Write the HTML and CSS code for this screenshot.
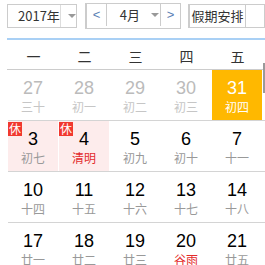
FILE: index.html
```html
<!DOCTYPE html>
<html lang="zh-CN">
<head>
    <meta charset="UTF-8">
    <title>万年历</title>
    <link rel="stylesheet" href="styles.css">
</head>
<body>
    <div class="calendar">
        <div class="toolbar">
            <div class="select year-select">
                <span class="select-text">2017年</span>
                <span class="select-arrow"></span>
            </div>
            <div class="month-group">
                <span class="nav-btn">&lt;</span>
                <div class="select month-select">
                    <span class="select-text">4月</span>
                    <span class="select-arrow"></span>
                </div>
                <span class="nav-btn">&gt;</span>
            </div>
            <div class="holiday-btn">假期安排</div>
            <div class="today-btn"></div>
        </div>

        <div class="weekdays">
            <span>一</span><span>二</span><span>三</span><span>四</span><span>五</span>
        </div>

        <div class="days">
            <div class="week">
                <div class="day other"><b>27</b><i>三十</i></div>
                <div class="day other"><b>28</b><i>初一</i></div>
                <div class="day other"><b>29</b><i>初二</i></div>
                <div class="day other"><b>30</b><i>初三</i></div>
                <div class="day today"><b>31</b><i>初四</i></div>
            </div>
            <div class="week">
                <div class="day rest"><em>休</em><b>3</b><i>初七</i></div>
                <div class="day rest"><em>休</em><b>4</b><i class="festival">清明</i></div>
                <div class="day"><b>5</b><i>初九</i></div>
                <div class="day"><b>6</b><i>初十</i></div>
                <div class="day"><b>7</b><i>十一</i></div>
            </div>
            <div class="week">
                <div class="day"><b>10</b><i>十四</i></div>
                <div class="day"><b>11</b><i>十五</i></div>
                <div class="day"><b>12</b><i>十六</i></div>
                <div class="day"><b>13</b><i>十七</i></div>
                <div class="day"><b>14</b><i>十八</i></div>
            </div>
            <div class="week">
                <div class="day"><b>17</b><i>廿一</i></div>
                <div class="day"><b>18</b><i>廿二</i></div>
                <div class="day"><b>19</b><i>廿三</i></div>
                <div class="day"><b>20</b><i class="festival">谷雨</i></div>
                <div class="day"><b>21</b><i>廿五</i></div>
            </div>
        </div>

        <div class="scroll-thumb"></div>
    </div>
</body>
</html>
```

FILE: styles.css
```css
body {
    margin: 0;
    background-color: white;
    font-family: "Liberation Sans", "Noto Sans CJK SC", sans-serif;
    color: #333;
    overflow: hidden;
}
.calendar {
    position: relative;
    width: 265px;
    height: 265px;
    overflow: hidden;
}

/* top bar with selects */
.toolbar {
    display: flex;
    align-items: center;
    padding: 4px 0 0 7px;
    height: 24px;
    white-space: nowrap;
}
.select {
    display: flex;
    align-items: center;
    height: 22px;
    border: 1px solid #ccc;
    background-color: white;
    font-family: "Noto Sans CJK SC", sans-serif;
    font-size: 13px;
    color: #333;
}
.year-select {
    width: 73px;
}
.year-select .select-text {
    width: 42px;
    padding-left: 10px;
    border-right: 1px solid #ddd;
    line-height: 22px;
}
.select-arrow {
    width: 0;
    height: 0;
    margin-left: 7px;
    border-left: 4px solid transparent;
    border-right: 4px solid transparent;
    border-top: 4px solid #999;
}
.month-group {
    display: flex;
    margin-left: 8px;
    height: 24px;
    border: 1px solid #ccc;
    border-left: 2px solid #ccc;
}
.nav-btn {
    width: 19px;
    line-height: 22px;
    text-align: center;
    font-size: 13px;
    color: #5a7fb5;
}
.month-select {
    width: 53px;
    border-top: none;
    border-bottom: none;
}
.month-select .select-text {
    width: 33px;
    text-align: right;
    line-height: 22px;
}
.month-select .select-arrow {
    margin-left: 11px;
}
.holiday-btn {
    margin-left: 7px;
    width: 62px;
    height: 22px;
    line-height: 22px;
    border: 1px solid #ccc;
    border-left: 2px solid #ccc;
    text-align: center;
    font-family: "Noto Sans CJK SC", sans-serif;
    font-size: 13px;
    color: #333;
}
.today-btn {
    width: 20px;
    height: 22px;
    border: 1px solid #ccc;
    border-left: none;
}

/* weekday header */
.weekdays {
    display: flex;
    margin: 10px 0 0 7px;
    border-top: 2px solid #a9d0f5;
    padding-left: 1px;
    height: 29px;
    border-bottom: 1px solid #ccc;
}
.weekdays span {
    flex: none;
    width: 51px;
    text-align: center;
    padding-top: 6px;
    line-height: 20px;
    font-family: "Noto Sans CJK SC", sans-serif;
    font-size: 14px;
    color: #333;
}

/* day grid */
.days {
    margin-left: 8px;
}
.week {
    display: flex;
    border-bottom: 1px solid #d4d4d4;
}
.day {
    position: relative;
    flex: none;
    width: 50px;
    height: 50px;
    margin-right: 1px;
    display: flex;
    flex-direction: column;
    align-items: center;
    padding-top: 8px;
    box-sizing: border-box;
}
.day b {
    font-weight: normal;
    font-size: 18px;
    line-height: 20px;
    color: #000;
}
.day i {
    font-style: normal;
    font-family: "Noto Sans CJK SC", sans-serif;
    font-size: 12px;
    line-height: 14px;
    margin-top: 2px;
    color: #999;
}
.day.other b { color: #bbb; }
.day.other i { color: #c6c6c6; }
.day.today { background-color: #ffb800; }
.day.today b, .day.today i { color: white; }
.day.rest { background-color: #fdecec; }
.day i.festival { color: #e32b2b; }
.day em {
    position: absolute;
    top: 1px;
    left: 0;
    width: 14px;
    height: 14px;
    line-height: 14px;
    text-align: center;
    background-color: #f1392f;
    color: white;
    font-style: normal;
    font-family: "Noto Sans CJK SC", sans-serif;
    font-size: 12px;
}

.scroll-thumb {
    position: absolute;
    left: 263px;
    top: 63px;
    width: 3px;
    height: 30px;
    background-color: #9a9a9a;
}
```
